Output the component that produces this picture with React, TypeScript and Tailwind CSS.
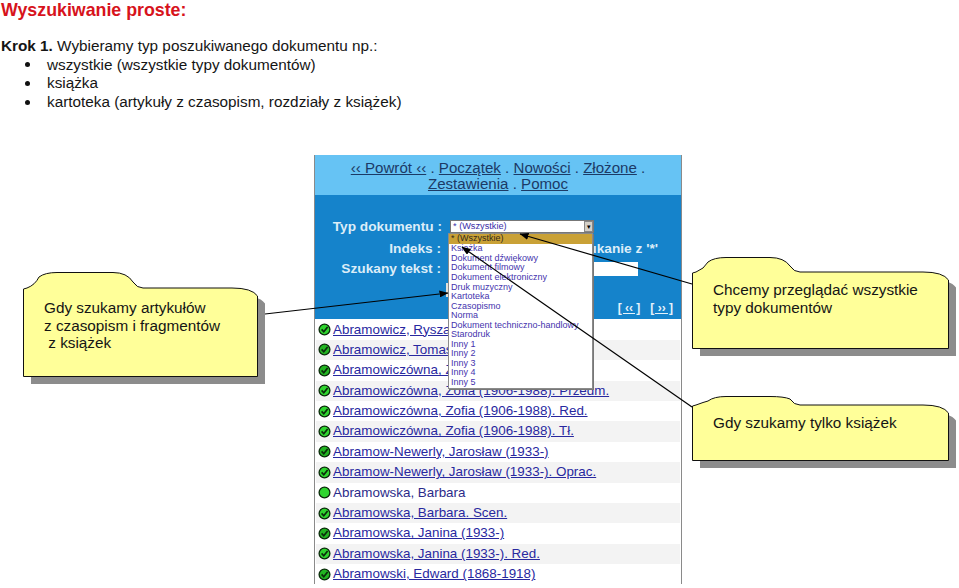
const MENU_ITEMS = [
  'Książka',
  'Dokument dźwiękowy',
  'Dokument filmowy',
  'Dokument elektroniczny',
  'Druk muzyczny',
  'Kartoteka',
  'Czasopismo',
  'Norma',
  'Dokument techniczno-handlowy',
  'Starodruk',
  'Inny 1',
  'Inny 2',
  'Inny 3',
  'Inny 4',
  'Inny 5',
]

const ROWS = [
  { label: 'Abramowicz, Ryszard' },
  { label: 'Abramowicz, Tomasz', dark: true },
  { label: 'Abramowiczówna, Zofia (1906-1988)', dark: true },
  { label: 'Abramowiczówna, Zofia (1906-1988). Przedm.' },
  { label: 'Abramowiczówna, Zofia (1906-1988). Red.' },
  { label: 'Abramowiczówna, Zofia (1906-1988). Tł.' },
  { label: 'Abramow-Newerly, Jarosław (1933-)', dark: true },
  { label: 'Abramow-Newerly, Jarosław (1933-). Oprac.' },
  { label: 'Abramowska, Barbara', plain: true },
  { label: 'Abramowska, Barbara. Scen.' },
  { label: 'Abramowska, Janina (1933-)', dark: true },
  { label: 'Abramowska, Janina (1933-). Red.' },
  { label: 'Abramowski, Edward (1868-1918)', dark: true },
]

function StatusIcon({ dark, plain }: { dark?: boolean; plain?: boolean }) {
  return (
    <svg width="13" height="13" viewBox="0 0 13 13" className="shrink-0">
      <circle cx="6.5" cy="6.5" r="5.4" fill={dark ? '#22b522' : '#2fd52f'} stroke="#0b2b0b" strokeWidth="1.3" />
      {!plain && <path d="M3.6 6.4 L5.8 8.8 L9.6 3.9" fill="none" stroke="#0b2b0b" strokeWidth="1.7" />}
    </svg>
  )
}

function Callout({
  className,
  width,
  height,
  tabHeight,
  tabWidth,
  textTop,
  lines,
}: {
  className: string
  width: number
  height: number
  tabHeight: number
  tabWidth: number
  textTop: number
  lines: string[]
}) {
  const outline = `M0.5 ${tabHeight + 1} L4 ${tabHeight} Q12 ${tabHeight - 3} 16 5 Q22 0.5 34 0.5 L${tabWidth - 30} 0.5 Q${tabWidth - 16} 0.5 ${tabWidth - 10} ${tabHeight - 6} Q${tabWidth - 6} ${tabHeight} ${tabWidth} ${tabHeight} L${width - 26} ${tabHeight} Q${width - 6} ${tabHeight} ${width - 0.5} ${tabHeight + 8} L${width - 0.5} ${height - 0.5} L0.5 ${height - 0.5} Z`
  return (
    <div className={`absolute ${className}`} style={{ width: width + 8, height: height + 8 }}>
      <svg width={width + 8} height={height + 8} className="absolute inset-0">
        <path d={outline} transform="translate(7.5 7.5)" fill="#8c8c8c" />
        <path d={outline} fill="#ffff99" stroke="#111" strokeWidth="1" />
      </svg>
      <div
        className="relative pl-[21px] text-[15.3px] leading-[17.5px] text-[#151515] whitespace-pre"
        style={{ paddingTop: textTop }}
      >
        {lines.map((line) => (
          <div key={line}>{line}</div>
        ))}
      </div>
    </div>
  )
}

function Arrow({ x1, y1, x2, y2 }: { x1: number; y1: number; x2: number; y2: number }) {
  return <line x1={x1} y1={y1} x2={x2} y2={y2} stroke="#000" strokeWidth="1.2" markerEnd="url(#arrowhead)" />
}

export default function App() {
  return (
    <div className="relative h-[588px] w-[959px] overflow-hidden bg-white font-['Liberation_Sans',Arial,sans-serif]">
      {/* Slide text */}
      <h1 className="pl-[1px] pt-0 text-[17.8px] font-bold leading-[20px] text-[#d7131c]">Wyszukiwanie proste:</h1>
      <div className="pl-[1px] pt-[17px] text-[15.3px] leading-[18.6px] text-[#151515]">
        <p>
          <b>Krok 1.</b> Wybieramy typ poszukiwanego dokumentu np.:
        </p>
        <ul>
          {['wszystkie (wszystkie typy dokumentów)', 'książka', 'kartoteka (artykuły z czasopism, rozdziały z książek)'].map(
            (item) => (
              <li key={item} className="flex items-center">
                <span className="ml-[24px] h-[5px] w-[5px] rounded-full bg-[#111]" />
                <span className="ml-[17px]">{item}</span>
              </li>
            ),
          )}
        </ul>
      </div>

      {/* Catalogue panel */}
      <div className="ml-[314px] mt-[44px] w-[368px] border-x border-[#8a8a8a] text-[#1c3a66]">
        <div className="h-[40px] bg-[#66c3f4] pt-[5px] text-center text-[15.1px] leading-[16px]">
          <div>
            <span className="underline">‹‹ Powrót ‹‹</span> . <span className="underline">Początek</span> .{' '}
            <span className="underline">Nowości</span> . <span className="underline">Złożone</span> .
          </div>
          <div>
            <span className="underline">Zestawienia</span> . <span className="underline">Pomoc</span>
          </div>
        </div>

        <div className="relative h-[124px] bg-[#1583cb] pr-[23px] pt-[25px] text-[13.7px] font-bold text-[#dcedf8]">
          <div className="flex h-[13px] items-center">
            <span className="w-[127px] text-right">Typ dokumentu :</span>
            <div className="ml-[8px] flex h-[13px] w-[144px] items-center justify-between border border-[#777] bg-white pl-[2px] text-[9.2px] font-normal leading-none text-[#3c2fa8]">
              <span>* (Wszystkie)</span>
              <span className="flex h-[11px] w-[9px] items-center justify-center border border-[#888] bg-[#d4d0c8] text-[7px] text-black">▾</span>
            </div>
          </div>
          <div className="mt-[8px] flex h-[16px] items-center">
            <span className="w-[126px] text-right">Indeks :</span>
            <span className="flex-1 text-right">Wyszukanie z '*'</span>
          </div>
          <div className="mt-[5px] flex h-[14px] items-center">
            <span className="w-[126px] text-right">Szukany tekst :</span>
            <div className="ml-[8px] h-[14px] w-[189px] bg-white" />
          </div>
          <div className="ml-[131px] mt-[7px] h-[14px] w-[30px] bg-[#e4e0d8]" />
          <div className="absolute bottom-[2px] right-[8px] flex gap-[10px] text-[12px] font-bold text-[#e4f2fb]">
            <span className="underline">[ ‹‹ ]</span>
            <span className="underline">[ ›› ]</span>
          </div>

          {/* Open select menu */}
          <div className="absolute left-[133px] top-[38px] w-[145px] border border-[#8a8a8a] bg-white text-[9px] font-normal leading-[9.55px] text-[#4433ae] shadow-[1px_1px_0_#777]">
            <div className="h-[10px] bg-[#c9a136] pl-[2px] text-[#33291a]">* (Wszystkie)</div>
            {MENU_ITEMS.map((item) => (
              <div key={item} className="h-[9.55px] whitespace-nowrap pl-[2px]">
                {item}
              </div>
            ))}
          </div>
        </div>

        <div className="pl-[1px] pr-[1px] text-[13.4px] text-[#28289f]">
          {ROWS.map((row, i) => (
            <div key={row.label} className={`flex h-[20.4px] items-center gap-[2px] pl-[2px] ${i % 2 === 1 ? 'bg-[#f3f3f3]' : ''}`}>
              <StatusIcon dark={row.dark} plain={row.plain} />
              <span className={`whitespace-nowrap ${row.plain ? 'text-[#2b2b8a]' : 'underline'}`}>{row.label}</span>
            </div>
          ))}
        </div>
      </div>

      {/* Notes */}
      <Callout className="left-[23px] top-[272px]" width={235} height={105} tabWidth={120} tabHeight={16} textTop={27} lines={['Gdy szukamy artykułów', 'z czasopism i fragmentów', ' z książek']} />
      <Callout className="left-[692px] top-[257px]" width={257} height={92} tabWidth={108} tabHeight={15} textTop={24} lines={['Chcemy przeglądać wszystkie', 'typy dokumentów']} />
      <Callout className="left-[692px] top-[396px]" width={257} height={65} tabWidth={108} tabHeight={9} textTop={18} lines={['Gdy szukamy tylko książek']} />

      {/* Arrows */}
      <svg width="959" height="588" className="pointer-events-none absolute inset-0">
        <defs>
          <marker id="arrowhead" markerWidth="9" markerHeight="7" refX="8.5" refY="3.5" orient="auto" markerUnits="userSpaceOnUse">
            <path d="M0 0 L9 3.5 L0 7 Z" fill="#000" />
          </marker>
        </defs>
        <Arrow x1={265} y1={314} x2={448} y2={293} />
        <Arrow x1={692} y1={284} x2={520} y2={234} />
        <Arrow x1={692} y1={407} x2={462} y2={247} />
      </svg>
    </div>
  )
}
